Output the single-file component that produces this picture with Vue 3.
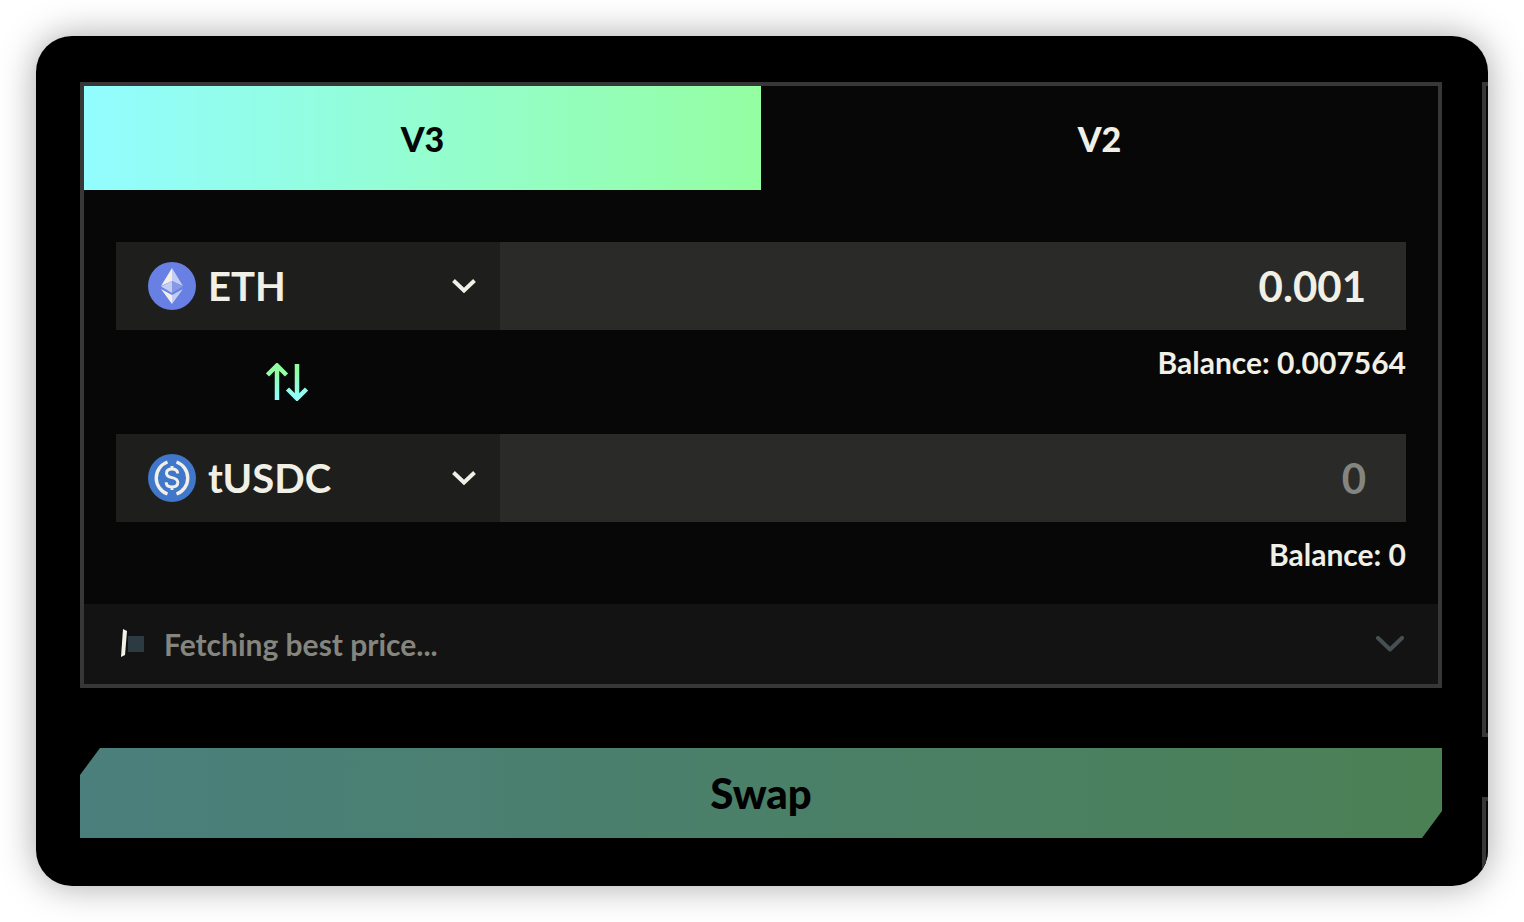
<script setup>
import { ref } from 'vue'

const versions = ['V3', 'V2']
const active = ref('V3')
const fromToken = ref('ETH')
const toToken = ref('tUSDC')
const fromAmount = ref('0.001')
const toAmount = ref('')
</script>

<template>
  <div class="page">
    <div class="window">
      <main class="main">
        <section class="panel">
          <div class="tabs" role="tablist">
            <button
              v-for="v in versions"
              :key="v"
              type="button"
              role="tab"
              class="tab"
              :class="{ active: active === v }"
              :aria-selected="active === v"
              @click="active = v"
            >{{ v }}</button>
          </div>

          <div class="form">
            <div class="row">
              <div class="picker">
                <svg class="coin" viewBox="0 0 48 48" aria-hidden="true">
                  <circle cx="24" cy="24" r="24" fill="#687fe3" />
                  <path d="M24 6 13 24 24 19Z" fill="#f0f0e8" />
                  <path d="M24 6 35 24 24 19Z" fill="#c3cdf3" />
                  <path d="M13 24.500 24 19V31Z" fill="#c3cdf3" />
                  <path d="M35 24.500 24 19V31Z" fill="#8799e5" />
                  <path d="M13 27 24 33V42Z" fill="#f0f0e8" />
                  <path d="M35 27 24 33V42Z" fill="#c3cdf3" />
                </svg>
                <select v-model="fromToken" class="token" aria-label="Token to sell">
                  <option>ETH</option>
                  <option>tUSDC</option>
                </select>
                <svg class="chevron" viewBox="0 0 24 14" aria-hidden="true">
                  <path d="M1.500 1.500 12 11.500 22.500 1.500" fill="none" stroke="#f0f0e6" stroke-width="4" />
                </svg>
              </div>
              <input v-model="fromAmount" class="amount" type="text" inputmode="decimal" placeholder="0" aria-label="Amount to sell" />
            </div>

            <div class="between">
              <div class="flip-cell">
                <button type="button" class="flip" aria-label="Switch tokens">
                  <svg viewBox="0 0 42 38" aria-hidden="true">
                    <defs>
                      <linearGradient id="flip" x1="0" y1="0" x2="0" y2="38" gradientUnits="userSpaceOnUse">
                        <stop offset="0.200" stop-color="#92fda0" />
                        <stop offset="0.900" stop-color="#92fdfb" />
                      </linearGradient>
                    </defs>
                    <path d="M11 37V2M1.500 12 11 2.500 20.500 12M31 1V36M21.500 26 31 35.500 40.500 26" fill="none" stroke="url(#flip)" stroke-width="4.500" />
                  </svg>
                </button>
              </div>
              <p class="balance">Balance: 0.007564</p>
            </div>

            <div class="row">
              <div class="picker">
                <svg class="coin" viewBox="0 0 48 48" aria-hidden="true">
                  <circle cx="24" cy="24" r="24" fill="#4177ca" />
                  <g fill="none" stroke="#f0f0e8">
                    <path d="M19.500 8A17 17 0 0 0 19.500 40M28.500 8A17 17 0 0 1 28.500 40" stroke-width="3.400" />
                    <path d="M29.700 19.500C29.500 16.500 27.500 15 24 15S18.500 16.800 18.500 19.200C18.500 21.800 20.300 22.900 24 23.600S29.800 25.700 29.800 28.600C29.800 31.300 27.500 33 24 33S18.200 31.300 18.200 28.300M24 12V15M24 33V36" stroke-width="3" />
                  </g>
                </svg>
                <select v-model="toToken" class="token" aria-label="Token to buy">
                  <option>ETH</option>
                  <option>tUSDC</option>
                </select>
                <svg class="chevron" viewBox="0 0 24 14" aria-hidden="true">
                  <path d="M1.500 1.500 12 11.500 22.500 1.500" fill="none" stroke="#f0f0e6" stroke-width="4" />
                </svg>
              </div>
              <input v-model="toAmount" class="amount" type="text" inputmode="decimal" placeholder="0" aria-label="Amount to buy" />
            </div>

            <p class="balance">Balance: 0</p>
          </div>

          <button type="button" class="quote">
            <svg class="loader" viewBox="0 0 24 30" aria-hidden="true">
              <path d="M3 0 7 2 5 26 1 28Z" fill="#f2f2e8" />
              <path d="M8 7H24V23H8Z" fill="#2c3a42" />
            </svg>
            <span class="status">Fetching best price...</span>
            <svg class="more" viewBox="0 0 28 16" aria-hidden="true">
              <path d="M2 2 14 13.500 26 2" fill="none" stroke="#465052" stroke-width="4" stroke-linecap="round" stroke-linejoin="round" />
            </svg>
          </button>
        </section>

        <button type="button" class="swap" disabled>Swap</button>
      </main>

      <aside class="side" aria-hidden="true">
        <div class="side-box tall"></div>
        <div class="side-box rest"></div>
      </aside>
    </div>
  </div>
</template>

<style>
body {
  background: #fff;
}
</style>

<style scoped>
.page {
  box-sizing: border-box;
  min-height: 100vh;
  padding: 36px;
  display: flex;
  font-family: Lato, "Open Sans", sans-serif;
  font-weight: 700;
  color: #f0f0e6;
}

.page * {
  box-sizing: border-box;
}

button,
input,
select {
  margin: 0;
  border: 0;
  border-radius: 0;
  font: inherit;
  color: inherit;
}

svg {
  display: block;
}

.window {
  flex: 1;
  display: flex;
  gap: 40px;
  padding: 46px 0 0 44px;
  background: #000;
  border-radius: 36px;
  overflow: hidden;
  box-shadow: 0 0 36px rgba(0, 0, 0, 0.35);
}

.main {
  flex: 1;
  min-width: 0;
  display: flex;
  flex-direction: column;
  gap: 60px;
  padding-bottom: 48px;
}

.panel {
  border: 4px solid #373737;
  background: #070707;
}

.tabs {
  display: grid;
  grid-template-columns: 1fr 1fr;
}

.tab {
  height: 104px;
  padding: 0;
  background: transparent;
  font-size: 34px;
  font-weight: 900;
}

.tab.active {
  background: linear-gradient(90deg, #92fdff, #94fea2);
  color: #070707;
}

.form {
  padding: 52px 32px 32px;
}

.row {
  display: flex;
  height: 88px;
}

.picker {
  flex: none;
  width: 384px;
  display: grid;
  grid-template-columns: 32px 48px 1fr 24px 24px;
  align-items: center;
  background: #1e1e1c;
}

.coin {
  grid-area: 1 / 2;
  z-index: 1;
  width: 48px;
  height: 48px;
  pointer-events: none;
}

.token {
  grid-area: 1 / 1 / 2 / 6;
  height: 100%;
  width: 100%;
  padding: 0 48px 0 92px;
  appearance: none;
  background: transparent;
  font-size: 40px;
}

.token option {
  background: #1e1e1c;
}

.chevron {
  grid-area: 1 / 4;
  width: 24px;
  height: 14px;
  pointer-events: none;
}

.amount {
  flex: 1;
  min-width: 0;
  padding: 0 40px;
  background: #2a2a28;
  font-size: 42px;
  text-align: right;
}

.amount::placeholder {
  color: #85857f;
  opacity: 1;
}

.between {
  display: flex;
  justify-content: space-between;
  height: 104px;
}

.flip-cell {
  width: 342px;
  display: flex;
  align-items: center;
  justify-content: center;
}

.flip {
  padding: 0;
  background: transparent;
}

.flip svg {
  width: 42px;
  height: 38px;
}

.balance {
  margin: 0;
  padding-top: 14px;
  font-size: 30px;
  line-height: 36px;
  text-align: right;
}

.quote {
  width: 100%;
  height: 80px;
  padding: 0 34px 0 36px;
  display: flex;
  align-items: center;
  gap: 20px;
  background: #131313;
  text-align: left;
}

.loader {
  width: 24px;
  height: 30px;
}

.status {
  flex: 1;
  font-size: 30px;
  line-height: 36px;
  color: #85857f;
}

.more {
  width: 28px;
  height: 16px;
}

.swap {
  height: 90px;
  padding: 0;
  background: linear-gradient(90deg, #4a7f7d, #4b8055);
  clip-path: polygon(20px 0, 100% 0, 100% 63px, calc(100% - 20px) 100%, 0 100%, 0 27px);
  font-size: 42px;
  font-weight: 900;
  color: #000;
}

.side {
  flex: none;
  width: 6px;
  display: flex;
  flex-direction: column;
  gap: 60px;
}

.side-box {
  border: 4px solid #373737;
  border-right: 0;
  background: #070707;
}

.tall {
  height: 655px;
}

.rest {
  flex: 1;
  border-bottom: 0;
}
</style>
